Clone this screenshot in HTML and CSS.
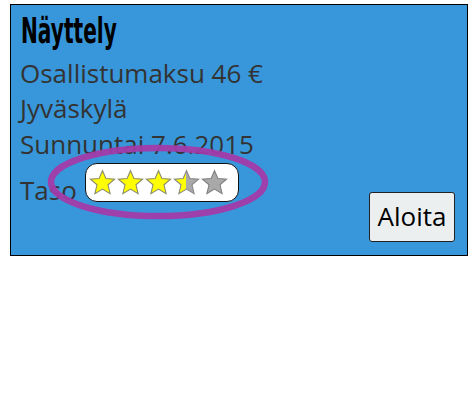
FILE: index.html
```html
<!DOCTYPE html>
<html>
<head>
<meta charset="utf-8">
<link rel="stylesheet" href="styles.css">
</head>
<body>
<div class="card">
  <h1 class="title">Näyttely</h1>
  <div class="line">Osallistumaksu 46 €</div>
  <div class="line">Jyväskylä</div>
  <div class="line">Sunnuntai 7.6.2015</div>
  <div class="bottom">
    <div class="level">
      <span class="level-label">Taso</span>
      <div class="stars">
        <svg class="star" viewBox="0 0 27 26"><path class="full" d="M13.5 1.2 L16.9 9 L25.6 9.6 L19 15.3 L21.1 24.2 L13.5 19.6 L5.9 24.2 L8 15.3 L1.4 9.6 L10.1 9 Z"/></svg>
        <svg class="star" viewBox="0 0 27 26"><path class="full" d="M13.5 1.2 L16.9 9 L25.6 9.6 L19 15.3 L21.1 24.2 L13.5 19.6 L5.9 24.2 L8 15.3 L1.4 9.6 L10.1 9 Z"/></svg>
        <svg class="star" viewBox="0 0 27 26"><path class="full" d="M13.5 1.2 L16.9 9 L25.6 9.6 L19 15.3 L21.1 24.2 L13.5 19.6 L5.9 24.2 L8 15.3 L1.4 9.6 L10.1 9 Z"/></svg>
        <svg class="star" viewBox="0 0 27 26">
          <defs><linearGradient id="half" x1="0" x2="1" y1="0" y2="0"><stop offset="0.5" stop-color="#ffff00"/><stop offset="0.5" stop-color="#a9a9a9"/></linearGradient></defs>
          <path class="half" d="M13.5 1.2 L16.9 9 L25.6 9.6 L19 15.3 L21.1 24.2 L13.5 19.6 L5.9 24.2 L8 15.3 L1.4 9.6 L10.1 9 Z"/></svg>
        <svg class="star" viewBox="0 0 27 26"><path class="empty" d="M13.5 1.2 L16.9 9 L25.6 9.6 L19 15.3 L21.1 24.2 L13.5 19.6 L5.9 24.2 L8 15.3 L1.4 9.6 L10.1 9 Z"/></svg>
      </div>
    </div>
    <button class="start">Aloita</button>
  </div>
  <svg class="highlight" width="240" height="90" viewBox="0 0 240 90"><ellipse cx="120" cy="45" rx="107" ry="34"/></svg>
</div>
</body>
</html>
```

FILE: styles.css
```css
html, body {
  margin: 0;
  padding: 0;
  background: #ffffff;
}

.card {
  position: relative;
  box-sizing: border-box;
  width: 458px;
  height: 252px;
  margin: 4px 0 0 10px;
  border: 1px solid #000;
  background: #3897da;
  padding: 6px 12px 13px 9px;
  font-family: "Open Sans", "DejaVu Sans", sans-serif;
  font-size: 26px;
  color: #333333;
}

.title {
  margin: 0 0 5px 1px;
  font-family: "DejaVu Sans Condensed", "Liberation Sans Narrow", sans-serif;
  font-weight: bold;
  font-size: 35px;
  line-height: 40px;
  height: 40px;
  color: #000;
  display: inline-block;
  transform: scaleX(0.64);
  transform-origin: left center;
}

.line {
  line-height: 35.4px;
  white-space: nowrap;
}

.bottom {
  display: flex;
  justify-content: space-between;
  align-items: flex-start;
}

.level {
  display: flex;
  align-items: flex-start;
  margin-top: 1px;
}

.level-label {
  margin-top: 10px;
  line-height: 35.4px;
}

.stars {
  box-sizing: border-box;
  margin-left: 8px;
  width: 154px;
  height: 39px;
  border: 1.5px solid #111;
  border-radius: 12px;
  background: #fff;
  display: flex;
  align-items: center;
  padding: 0 0 0 3.5px;
  gap: 1px;
}

.star {
  width: 27px;
  height: 27px;
  display: block;
}

.star path {
  stroke-width: 1.1;
  stroke-linejoin: miter;
}

.star .full {
  fill: #ffff00;
  stroke: #8a8a6a;
}

.star .half {
  fill: url(#half);
  stroke: #888;
}

.star .empty {
  fill: #a9a9a9;
  stroke: #808080;
}

.start {
  box-sizing: border-box;
  margin-top: 30px;
  flex: 0 0 86px;
  width: 86px;
  height: 50px;
  padding: 0 0 3px 0;
  border: 1px solid #222;
  border-radius: 3px;
  background: #eceff0;
  font-family: "Open Sans", "DejaVu Sans", sans-serif;
  font-size: 26px;
  color: #000;
}

.highlight {
  position: absolute;
  left: 27px;
  top: 132px;
  fill: none;
  pointer-events: none;
}

.highlight ellipse {
  stroke: #a23ba9;
  stroke-width: 6.5;
  opacity: 0.95;
}
```
